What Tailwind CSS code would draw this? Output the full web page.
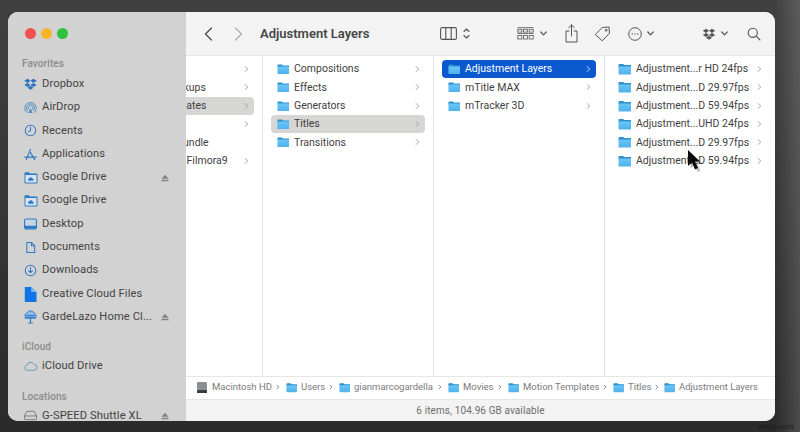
<!DOCTYPE html>
<html lang="en">
<head>
  <meta charset="UTF-8" />
  <title>Adjustment Layers</title>
  <script src="https://cdn.jsdelivr.net/npm/@tailwindcss/browser@4"></script>
</head>
<body class="overflow-hidden bg-[#2b2b2b]">

  <!-- shared icons -->
  <svg class="absolute h-0 w-0">
    <defs>
      <linearGradient id="fold" x1="0" y1="0" x2="0" y2="1"><stop offset="0" stop-color="#6ac6f7"/><stop offset="1" stop-color="#4fb2ec"/></linearGradient>
      <symbol id="folder" viewBox="0 0 13 12">
        <path d="M.5 2.200C.5 1.500 1 1 1.700 1h3c.4 0 .7.1 1 .4l.7.7h5.900c.7 0 1.200.5 1.200 1.200v1H.5z" fill="#2f8fcb"/>
        <path d="M.5 3.400h12c.3 0 .5.2.5.5v6.600c0 .6-.5 1-1 1H1.500c-.6 0-1-.4-1-1z" fill="url(#fold)"/>
      </symbol>
      <symbol id="chev" viewBox="0 0 5 8"><path d="M1.200 1.500l2.500 2.500-2.500 2.500" fill="none" stroke="currentColor" stroke-width="1" stroke-linecap="round" stroke-linejoin="round"/></symbol>
      <symbol id="eject" viewBox="0 0 8 8"><path d="M4 .8L7.500 4.700H.5z M.5 5.800h7v1.500h-7z" fill="#828282"/></symbol>
      <symbol id="gdrive" viewBox="0 0 14 13">
        <path d="M.5 2.500C.5 1.700 1 1.200 1.800 1.200h3l1.200 1.200h6.200c.8 0 1.300.5 1.300 1.300v7.500c0 .8-.5 1.300-1.300 1.300H1.800c-.8 0-1.300-.5-1.300-1.300z" fill="#2e7cc6"/>
        <rect x="1.500" y="4" width="11" height="7.500" rx=".6" fill="#d9e4ee"/>
        <path d="M4.800 9.800a1.200 1.200 0 0 1 .2-2.300 2 2 0 0 1 3.800.2 1.100 1.100 0 0 1 .2 2.100z" fill="#2e7cc6"/>
      </symbol>
    </defs>
  </svg>

  <div class="relative h-[432px] w-[800px] bg-gradient-to-b from-[#404040] to-[#2b2b2b] pl-[8px] pt-[12px] font-['Roboto',sans-serif] blur-[0.4px]">
    <!-- lighter strip down the right edge of the desktop -->
    <div class="absolute inset-y-0 right-0 w-[25px] bg-gradient-to-r from-transparent to-white/15"></div>

    <div class="relative flex h-[409px] w-[767px] overflow-hidden rounded-[10px] bg-white">

      <!-- sidebar -->
      <aside class="w-[178px] shrink-0 overflow-hidden bg-[#d1d2d1] pl-[14px] text-[11.2px] tracking-[0.1px] text-[#444444]">
        <div class="flex h-[43px] items-center gap-[5.5px] pl-[3px]">
          <span class="h-[10.5px] w-[10.5px] rounded-full bg-[#f2534e]"></span>
          <span class="h-[10.5px] w-[10.5px] rounded-full bg-[#f6b62c]"></span>
          <span class="h-[10.5px] w-[10.5px] rounded-full bg-[#2fc23f]"></span>
        </div>
        <div class="flex h-[17px] items-center text-[10px] font-medium text-[#8c8c8c]">Favorites</div>

        <div class="ml-[2px] mt-[0.7px] flex h-[23.3px] items-center gap-[5px]">
          <svg class="w-[13px] h-[12px] shrink-0" viewBox="0 0 14 13" fill="#2c74bf"><path d="M3.800.8L.3 3l3.500 2.300L7 3zM10.200.8L7 3l3.200 2.300L13.700 3zM.3 7.500l3.500 2.300L7 7.600 3.800 5.300zM10.200 5.300L7 7.600l3.200 2.200 3.500-2.300zM3.800 10.500L7 12.600l3.200-2.100L7 8.300z"/></svg>
          <span>Dropbox</span>
        </div>
        <div class="ml-[2px] flex h-[23.3px] items-center gap-[5px]">
          <svg class="w-[13px] h-[13px] shrink-0" viewBox="0 0 14 14" fill="none" stroke="#4f8cc7" stroke-width="1"><path d="M3 12.500a6.200 6.200 0 1 1 8 0"/><path d="M4.300 10.800a4.300 4.300 0 1 1 5.400 0"/><path d="M5.500 9.200a2.400 2.400 0 1 1 3 0"/><path d="M7 7.500l2.200 5.500H4.800z" fill="#4f8cc7" stroke="none"/></svg>
          <span>AirDrop</span>
        </div>
        <div class="ml-[2px] flex h-[23.3px] items-center gap-[5px]">
          <svg class="w-[13px] h-[13px] shrink-0" viewBox="0 0 14 14" fill="none" stroke="#2f78c4" stroke-width="1.100"><circle cx="7" cy="7" r="5.700"/><path d="M7 3.500V7.300L4.700 8.500" stroke-linecap="round"/></svg>
          <span>Recents</span>
        </div>
        <div class="ml-[2px] flex h-[23.3px] items-center gap-[5px]">
          <svg class="w-[13px] h-[13px] shrink-0" viewBox="0 0 14 14" fill="none" stroke="#2f78c4" stroke-width="1.200" stroke-linecap="round"><path d="M7 1.500L2.500 12.500M7 4.800l4.500 7.700M.8 9.800h12.400"/></svg>
          <span>Applications</span>
        </div>
        <div class="ml-[2px] flex h-[23.3px] items-center gap-[5px] pr-[17px]">
          <svg class="w-[14px] h-[13px] -mr-px shrink-0"><use href="#gdrive"/></svg>
          <span class="flex-1">Google Drive</span>
          <svg class="h-[8px] w-[8px]"><use href="#eject"/></svg>
        </div>
        <div class="ml-[2px] flex h-[23.3px] items-center gap-[5px]">
          <svg class="w-[14px] h-[13px] -mr-px shrink-0"><use href="#gdrive"/></svg>
          <span>Google Drive</span>
        </div>
        <div class="ml-[2px] flex h-[23.3px] items-center gap-[5px]">
          <svg class="w-[13px] h-[12px] shrink-0" viewBox="0 0 14 12"><rect x=".6" y=".6" width="12.800" height="10.800" rx="1.700" fill="#c4d5e6" stroke="#2f78c4" stroke-width="1.200"/><path d="M1 8h12v2a1 1 0 0 1-1 1H2a1 1 0 0 1-1-1z" fill="#2f78c4"/></svg>
          <span>Desktop</span>
        </div>
        <div class="ml-[2px] flex h-[23.3px] items-center gap-[5px]">
          <svg class="w-[13px] h-[13px] shrink-0" viewBox="0 0 14 14" fill="none" stroke="#2f78c4" stroke-width="1.100" stroke-linejoin="round"><path d="M3 1.500h5l3.500 3.500v7.500H3z"/><path d="M8 1.500V5h3.500"/></svg>
          <span>Documents</span>
        </div>
        <div class="ml-[2px] flex h-[23.3px] items-center gap-[5px]">
          <svg class="w-[13px] h-[13px] shrink-0" viewBox="0 0 14 14" fill="none" stroke="#2f78c4" stroke-width="1.100" stroke-linecap="round" stroke-linejoin="round"><circle cx="7" cy="7" r="5.700"/><path d="M7 3.800v5.400M4.900 7.300L7 9.400l2.100-2.100"/></svg>
          <span>Downloads</span>
        </div>
        <div class="ml-[2px] flex h-[23.3px] items-center gap-[5px]">
          <svg class="w-[13px] h-[15px] shrink-0" viewBox="0 0 13 15"><path d="M.8 0h6.400L12.500 5v10H.8z" fill="#1175e6"/><path d="M7.200 0v5h5.300z" fill="#7fb6f2"/></svg>
          <span>Creative Cloud Files</span>
        </div>
        <div class="ml-[2px] flex h-[23.3px] items-center gap-[5px] pr-[17px]">
          <svg class="w-[13px] h-[14px] shrink-0" viewBox="0 0 14 15"><path d="M3 8.500a2.600 2.600 0 0 1 .3-5.100 3.900 3.900 0 0 1 7.400 0 2.600 2.600 0 0 1 .3 5.100z" fill="#8cc0ee" stroke="#2f78c4" stroke-width="1"/><path d="M.8 8.500h12.400M7 8.500V14M4.500 14h5M2.500 6h9" stroke="#2f78c4" stroke-width="1.200" fill="none"/></svg>
          <span class="flex-1 whitespace-nowrap">GardeLazo Home Cl...</span>
          <svg class="h-[8px] w-[8px]"><use href="#eject"/></svg>
        </div>

        <div class="mt-[9.7px] flex h-[16px] items-center text-[10px] font-medium text-[#8c8c8c]">iCloud</div>
        <div class="ml-[2px] flex h-[23.3px] items-center gap-[5px]">
          <svg class="w-[14px] h-[10px] -mr-px shrink-0" viewBox="0 0 14 10" fill="none" stroke="#6d9bb0" stroke-width="1"><path d="M3.300 9.300a2.600 2.600 0 0 1-.4-5.100 3.800 3.800 0 0 1 7.100-.8 3 3 0 0 1 .8 5.900z"/></svg>
          <span>iCloud Drive</span>
        </div>

        <div class="mt-[10.4px] flex h-[16px] items-center text-[10px] font-medium text-[#8c8c8c]">Locations</div>
        <div class="ml-[2px] flex h-[23.3px] items-center gap-[5px] pr-[17px]">
          <svg class="w-[13px] h-[11px] shrink-0" viewBox="0 0 14 11" fill="none" stroke="#777777" stroke-width="1"><path d="M3 1h8l2.500 5v3a1 1 0 0 1-1 1h-11a1 1 0 0 1-1-1V6zM.5 6h13"/></svg>
          <span class="flex-1">G-SPEED Shuttle XL</span>
          <svg class="h-[8px] w-[8px]"><use href="#eject"/></svg>
        </div>
      </aside>

      <main class="flex min-w-0 flex-1 flex-col">
        <!-- toolbar -->
        <header class="flex h-[43px] shrink-0 items-center bg-[#f2f3f2] pl-[18px] text-[#555555]">
          <svg class="h-[14px] w-[9px] text-[#4a4a4a]" viewBox="0 0 9 14" fill="none" stroke="currentColor" stroke-width="1.300" stroke-linecap="round" stroke-linejoin="round"><path d="M7.500 1L1.500 7l6 6"/></svg>
          <svg class="ml-[21px] h-[14px] w-[9px] text-[#adadad]" viewBox="0 0 9 14" fill="none" stroke="currentColor" stroke-width="1.300" stroke-linecap="round" stroke-linejoin="round"><path d="M1.500 1l6 6-6 6"/></svg>
          <span class="ml-[17px] w-[180px] text-[13px] font-semibold text-[#464646]">Adjustment Layers</span>
          <svg class="h-[13px] w-[17px]" viewBox="0 0 17 13" fill="none" stroke="#555555" stroke-width="1.100"><rect x=".6" y=".6" width="15.800" height="11.800" rx="1.500"/><path d="M5.800 .6v11.800M11.200 .6v11.800"/></svg>
          <svg class="ml-[6px] h-[13px] w-[7px]" viewBox="0 0 7 13" fill="none" stroke="#555555" stroke-width="1.100" stroke-linecap="round" stroke-linejoin="round"><path d="M1 4.500L3.500 2 6 4.500M1 8.500L3.500 11 6 8.500"/></svg>
          <svg class="ml-[47px] h-[13px] w-[17px]" viewBox="0 0 17 13" fill="none" stroke="#666666" stroke-width=".9"><path d="M.5 .6h16M.5 6.500h16" /><rect x=".8" y="2.300" width="4" height="2.800"/><rect x="6.500" y="2.300" width="4" height="2.800"/><rect x="12.200" y="2.300" width="4" height="2.800"/><rect x=".8" y="8.500" width="4" height="3.500"/><rect x="6.500" y="8.500" width="4" height="3.500"/><rect x="12.200" y="8.500" width="4" height="3.500"/></svg>
          <svg class="ml-[6px] h-[5px] w-[7px]" viewBox="0 0 7 5" fill="none" stroke="#555555" stroke-width="1.200" stroke-linecap="round" stroke-linejoin="round"><path d="M.8 1L3.500 3.800 6.200 1"/></svg>
          <svg class="ml-[18px] h-[19px] w-[13px]" viewBox="0 0 13 19" fill="none" stroke="#555555" stroke-width="1" stroke-linecap="round" stroke-linejoin="round"><path d="M6.500 1v11M3.700 3.700L6.500 1l2.800 2.700M4 7H1v11h11V7H9"/></svg>
          <svg class="ml-[16px] h-[16px] w-[17px]" viewBox="0 0 17 16" fill="none" stroke="#555555" stroke-width="1" stroke-linejoin="round"><path d="M1.200 8.500L8.300 1.500 15 1l.5 6.200-7.200 7.600z"/><circle cx="12.200" cy="4.200" r="1"/></svg>
          <svg class="ml-[17px] h-[14px] w-[14px]" viewBox="0 0 14 14" fill="none" stroke="#555555" stroke-width="1"><circle cx="7" cy="7" r="6.300"/><circle cx="4.200" cy="7" r=".7" fill="#555555" stroke="none"/><circle cx="7" cy="7" r=".7" fill="#555555" stroke="none"/><circle cx="9.800" cy="7" r=".7" fill="#555555" stroke="none"/></svg>
          <svg class="ml-[5px] h-[5px] w-[7px]" viewBox="0 0 7 5" fill="none" stroke="#555555" stroke-width="1.200" stroke-linecap="round" stroke-linejoin="round"><path d="M.8 1L3.500 3.800 6.200 1"/></svg>
          <svg class="ml-[48px] h-[12px] w-[14px]" viewBox="0 0 14 13" fill="#555555"><path d="M3.800.8L.3 3l3.500 2.300L7 3zM10.200.8L7 3l3.200 2.300L13.700 3zM.3 7.500l3.500 2.300L7 7.600 3.800 5.300zM10.200 5.300L7 7.600l3.200 2.200 3.500-2.300zM3.800 10.500L7 12.600l3.200-2.100L7 8.300z"/></svg>
          <svg class="ml-[5px] h-[5px] w-[7px]" viewBox="0 0 7 5" fill="none" stroke="#555555" stroke-width="1.200" stroke-linecap="round" stroke-linejoin="round"><path d="M.8 1L3.500 3.800 6.200 1"/></svg>
          <svg class="ml-[19px] h-[14px] w-[14px]" viewBox="0 0 14 14" fill="none" stroke="#555555" stroke-width="1.100" stroke-linecap="round"><circle cx="5.800" cy="5.800" r="4.600"/><path d="M9.200 9.200l3.800 3.800"/></svg>
        </header>

        <!-- columns -->
        <section class="flex min-h-0 flex-1 border-t border-[#e6e6e6] text-[10.5px] text-[#3f3f3f]">
          <!-- first column slides under the sidebar -->
          <div class="w-[77px] shrink-0 overflow-hidden border-r border-[#e4e4e4] pt-[4px]">
            <div class="-ml-[95px] w-[171px] pl-[8px] pr-[8px]">
              <div class="flex h-[18.33px] items-center pl-[6px] pr-[5px] text-[#a5a5a5]"><span class="flex-1"></span><svg class="h-[8px] w-[5px]"><use href="#chev"/></svg></div>
              <div class="flex h-[18.33px] items-center pl-[6px] pr-[5px]"><svg class="mr-[5px] h-[12px] w-[12px] shrink-0"><use href="#folder"/></svg><span class="flex-1 whitespace-nowrap">Final Cut Backups</span><svg class="h-[8px] w-[5px] text-[#a5a5a5]"><use href="#chev"/></svg></div>
              <div class="flex h-[18.33px] items-center rounded-r-[4px] bg-[#d6d6d5] pl-[6px] pr-[5px]"><svg class="mr-[5px] h-[12px] w-[12px] shrink-0"><use href="#folder"/></svg><span class="flex-1 whitespace-nowrap">Motion Templates</span><svg class="h-[8px] w-[5px] text-[#a5a5a5]"><use href="#chev"/></svg></div>
              <div class="flex h-[18.33px] items-center pl-[6px] pr-[5px] text-[#a5a5a5]"><span class="flex-1"></span><svg class="h-[8px] w-[5px]"><use href="#chev"/></svg></div>
              <div class="flex h-[18.33px] items-center pl-[6px] pr-[5px]"><svg class="mr-[5px] h-[12px] w-[12px] shrink-0"><use href="#folder"/></svg><span class="flex-1 whitespace-nowrap">Transitions Bundle</span></div>
              <div class="flex h-[18.33px] items-center pl-[6px] pr-[5px]"><svg class="mr-[5px] h-[12px] w-[12px] shrink-0"><use href="#folder"/></svg><span class="flex-1 whitespace-nowrap">Wondershare Filmora9</span><svg class="h-[8px] w-[5px] text-[#a5a5a5]"><use href="#chev"/></svg></div>
            </div>
          </div>

          <div class="w-[171px] shrink-0 border-r border-[#e4e4e4] px-[8px] pt-[4px]">
            <div class="flex h-[18.33px] items-center pl-[6px] pr-[5px]"><svg class="mr-[5px] h-[12px] w-[12px] shrink-0"><use href="#folder"/></svg><span class="flex-1">Compositions</span><svg class="h-[8px] w-[5px] text-[#a5a5a5]"><use href="#chev"/></svg></div>
            <div class="flex h-[18.33px] items-center pl-[6px] pr-[5px]"><svg class="mr-[5px] h-[12px] w-[12px] shrink-0"><use href="#folder"/></svg><span class="flex-1">Effects</span><svg class="h-[8px] w-[5px] text-[#a5a5a5]"><use href="#chev"/></svg></div>
            <div class="flex h-[18.33px] items-center pl-[6px] pr-[5px]"><svg class="mr-[5px] h-[12px] w-[12px] shrink-0"><use href="#folder"/></svg><span class="flex-1">Generators</span><svg class="h-[8px] w-[5px] text-[#a5a5a5]"><use href="#chev"/></svg></div>
            <div class="flex h-[18.33px] items-center rounded-[4px] bg-[#d6d6d5] pl-[6px] pr-[5px]"><svg class="mr-[5px] h-[12px] w-[12px] shrink-0"><use href="#folder"/></svg><span class="flex-1">Titles</span><svg class="h-[8px] w-[5px] text-[#a5a5a5]"><use href="#chev"/></svg></div>
            <div class="flex h-[18.33px] items-center pl-[6px] pr-[5px]"><svg class="mr-[5px] h-[12px] w-[12px] shrink-0"><use href="#folder"/></svg><span class="flex-1">Transitions</span><svg class="h-[8px] w-[5px] text-[#a5a5a5]"><use href="#chev"/></svg></div>
          </div>

          <div class="w-[171px] shrink-0 border-r border-[#e4e4e4] px-[8px] pt-[4px]">
            <div class="flex h-[18.33px] items-center rounded-[4px] bg-[#0b58cf] pl-[6px] pr-[5px] text-white"><svg class="mr-[5px] h-[12px] w-[12px] shrink-0"><use href="#folder"/></svg><span class="flex-1">Adjustment Layers</span><svg class="h-[8px] w-[5px] text-[#c5d6f2]"><use href="#chev"/></svg></div>
            <div class="flex h-[18.33px] items-center pl-[6px] pr-[5px]"><svg class="mr-[5px] h-[12px] w-[12px] shrink-0"><use href="#folder"/></svg><span class="flex-1">mTitle MAX</span><svg class="h-[8px] w-[5px] text-[#a5a5a5]"><use href="#chev"/></svg></div>
            <div class="flex h-[18.33px] items-center pl-[6px] pr-[5px]"><svg class="mr-[5px] h-[12px] w-[12px] shrink-0"><use href="#folder"/></svg><span class="flex-1">mTracker 3D</span><svg class="h-[8px] w-[5px] text-[#a5a5a5]"><use href="#chev"/></svg></div>
          </div>

          <div class="flex-1 px-[8px] pt-[4px]">
            <div class="flex h-[18.33px] items-center pl-[5px] pr-[5px]"><svg class="mr-[5px] h-[12px] w-[13px] shrink-0"><use href="#folder"/></svg><span class="flex-1 whitespace-nowrap">Adjustment...r HD 24fps</span><svg class="h-[8px] w-[5px] text-[#a5a5a5]"><use href="#chev"/></svg></div>
            <div class="flex h-[18.33px] items-center pl-[5px] pr-[5px]"><svg class="mr-[5px] h-[12px] w-[13px] shrink-0"><use href="#folder"/></svg><span class="flex-1 whitespace-nowrap">Adjustment...D 29.97fps</span><svg class="h-[8px] w-[5px] text-[#a5a5a5]"><use href="#chev"/></svg></div>
            <div class="flex h-[18.33px] items-center pl-[5px] pr-[5px]"><svg class="mr-[5px] h-[12px] w-[13px] shrink-0"><use href="#folder"/></svg><span class="flex-1 whitespace-nowrap">Adjustment...D 59.94fps</span><svg class="h-[8px] w-[5px] text-[#a5a5a5]"><use href="#chev"/></svg></div>
            <div class="flex h-[18.33px] items-center pl-[5px] pr-[5px]"><svg class="mr-[5px] h-[12px] w-[13px] shrink-0"><use href="#folder"/></svg><span class="flex-1 whitespace-nowrap">Adjustment...UHD 24fps</span><svg class="h-[8px] w-[5px] text-[#a5a5a5]"><use href="#chev"/></svg></div>
            <div class="flex h-[18.33px] items-center pl-[5px] pr-[5px]"><svg class="mr-[5px] h-[12px] w-[13px] shrink-0"><use href="#folder"/></svg><span class="flex-1 whitespace-nowrap">Adjustment...D 29.97fps</span><svg class="h-[8px] w-[5px] text-[#a5a5a5]"><use href="#chev"/></svg></div>
            <div class="flex h-[18.33px] items-center pl-[5px] pr-[5px]"><svg class="mr-[5px] h-[12px] w-[13px] shrink-0"><use href="#folder"/></svg><span class="flex-1 whitespace-nowrap">Adjustment...D 59.94fps</span><svg class="h-[8px] w-[5px] text-[#a5a5a5]"><use href="#chev"/></svg></div>
          </div>
        </section>

        <!-- path bar -->
        <div class="flex h-[23px] shrink-0 items-center whitespace-nowrap border-t border-[#e6e6e6] pb-[2px] pl-[11px] text-[9.5px] text-[#7b7b7b]">
          <svg class="mr-[5px] h-[11px] w-[10px] shrink-0" viewBox="0 0 10 11"><rect width="10" height="8" fill="#8c8f92" rx="1"/><rect y="8" width="10" height="3" fill="#3c3c3c" rx=".5"/></svg>
          <span class="w-[61px]">Macintosh HD</span>
          <svg class="mx-[3px] h-[6px] w-[4px] text-[#666666]"><use href="#chev"/></svg>
          <svg class="ml-[3px] mr-[4px] h-[11px] w-[11px] shrink-0"><use href="#folder"/></svg><span class="w-[25px]">Users</span>
          <svg class="mx-[3px] h-[6px] w-[4px] text-[#666666]"><use href="#chev"/></svg>
          <svg class="ml-[3px] mr-[4px] h-[11px] w-[11px] shrink-0"><use href="#folder"/></svg><span class="w-[81px]">gianmarcogardella</span>
          <svg class="mx-[3px] h-[6px] w-[4px] text-[#666666]"><use href="#chev"/></svg>
          <svg class="ml-[3px] mr-[4px] h-[11px] w-[11px] shrink-0"><use href="#folder"/></svg><span class="w-[32px]">Movies</span>
          <svg class="mx-[3px] h-[6px] w-[4px] text-[#666666]"><use href="#chev"/></svg>
          <svg class="ml-[3px] mr-[4px] h-[11px] w-[11px] shrink-0"><use href="#folder"/></svg><span class="w-[77px]">Motion Templates</span>
          <svg class="mx-[3px] h-[6px] w-[4px] text-[#666666]"><use href="#chev"/></svg>
          <svg class="ml-[3px] mr-[4px] h-[11px] w-[11px] shrink-0"><use href="#folder"/></svg><span class="w-[24px]">Titles</span>
          <svg class="mx-[3px] h-[6px] w-[4px] text-[#666666]"><use href="#chev"/></svg>
          <svg class="ml-[2px] mr-[4px] h-[11px] w-[11px] shrink-0"><use href="#folder"/></svg><span>Adjustment Layers</span>
        </div>

        <!-- status bar -->
        <div class="flex h-[22px] shrink-0 items-center justify-center border-t border-[#e6e6e6] bg-[#f2f3f2] pb-[1px] text-[10px] tracking-[0.1px] text-[#6e6e6e]">6 items, 104.96 GB available</div>
      </main>
    </div>

    <!-- mouse pointer -->
    <svg class="absolute left-[686px] top-[149px] h-[25px] w-[17px]" viewBox="0 0 17 25">
      <path d="M3 3v15l4-3.500 3 7 3-1.500-3-6.500h5z" fill="#000000" opacity=".25" transform="translate(1.500 1.500)"/>
      <path d="M2 1v16l4-3.500 3 7 3-1.500-3-6.500h5z" fill="#0a0a0a"/>
    </svg>

    <span class="absolute left-[757px] top-[421px] text-[8px] text-[#1c1c1c]">wtvid.com</span>
  </div>
</body>
</html>
